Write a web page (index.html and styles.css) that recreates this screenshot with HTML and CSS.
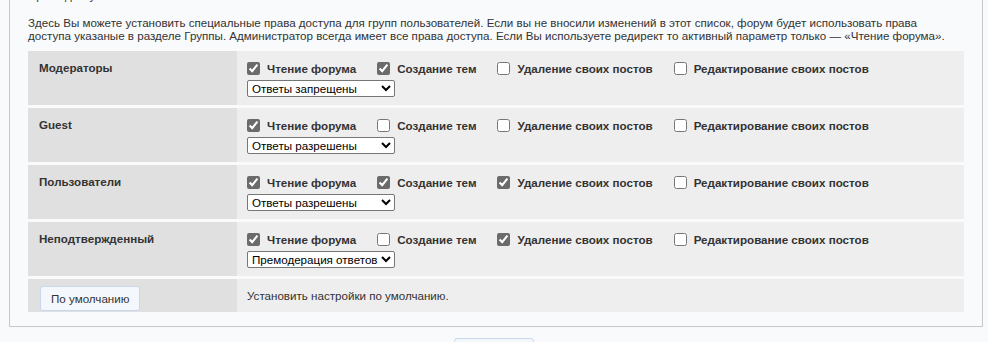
FILE: index.html
```html
<!DOCTYPE html>
<html lang="ru">
<head>
  <meta charset="UTF-8" />
  <title>Права доступа</title>
  <link rel="stylesheet" href="styles.css">
</head>
<body>
  <div class="box">
    <div class="box-title">Права доступа</div>
    <p class="intro">Здесь Вы можете установить специальные права доступа для групп пользователей. Если вы не вносили изменений в этот список, форум будет использовать права доступа указаные в разделе Группы. Администратор всегда имеет все права доступа. Если Вы используете редирект то активный параметр только — «Чтение форума».</p>

    <div class="perms">
      <div class="perm-row">
        <div class="perm-group">Модераторы</div>
        <div class="perm-opts">
          <div class="checks">
            <label class="chk"><input type="checkbox" checked> Чтение форума</label>
            <label class="chk"><input type="checkbox" checked> Создание тем</label>
            <label class="chk"><input type="checkbox"> Удаление своих постов</label>
            <label class="chk"><input type="checkbox"> Редактирование своих постов</label>
          </div>
          <select class="reply-select">
            <option>Ответы запрещены</option>
            <option>Ответы разрешены</option>
            <option>Премодерация ответов</option>
          </select>
        </div>
      </div>

      <div class="perm-row">
        <div class="perm-group">Guest</div>
        <div class="perm-opts">
          <div class="checks">
            <label class="chk"><input type="checkbox" checked> Чтение форума</label>
            <label class="chk"><input type="checkbox"> Создание тем</label>
            <label class="chk"><input type="checkbox"> Удаление своих постов</label>
            <label class="chk"><input type="checkbox"> Редактирование своих постов</label>
          </div>
          <select class="reply-select">
            <option>Ответы запрещены</option>
            <option selected>Ответы разрешены</option>
            <option>Премодерация ответов</option>
          </select>
        </div>
      </div>

      <div class="perm-row">
        <div class="perm-group">Пользователи</div>
        <div class="perm-opts">
          <div class="checks">
            <label class="chk"><input type="checkbox" checked> Чтение форума</label>
            <label class="chk"><input type="checkbox" checked> Создание тем</label>
            <label class="chk"><input type="checkbox" checked> Удаление своих постов</label>
            <label class="chk"><input type="checkbox"> Редактирование своих постов</label>
          </div>
          <select class="reply-select">
            <option>Ответы запрещены</option>
            <option selected>Ответы разрешены</option>
            <option>Премодерация ответов</option>
          </select>
        </div>
      </div>

      <div class="perm-row">
        <div class="perm-group">Неподтвержденный</div>
        <div class="perm-opts">
          <div class="checks">
            <label class="chk"><input type="checkbox" checked> Чтение форума</label>
            <label class="chk"><input type="checkbox"> Создание тем</label>
            <label class="chk"><input type="checkbox" checked> Удаление своих постов</label>
            <label class="chk"><input type="checkbox"> Редактирование своих постов</label>
          </div>
          <select class="reply-select">
            <option>Ответы запрещены</option>
            <option>Ответы разрешены</option>
            <option selected>Премодерация ответов</option>
          </select>
        </div>
      </div>

      <div class="perm-row perm-row-reset">
        <div class="perm-group"><button class="btn" type="button">По умолчанию</button></div>
        <div class="perm-opts perm-note">Установить настройки по умолчанию.</div>
      </div>
    </div>
  </div>

  <div class="submit-bar">
    <button class="btn btn-submit" type="submit">Сохранить</button>
  </div>
</body>
</html>
```

FILE: styles.css
```css
body {
  margin: 0;
  padding: 0;
  background: #f8fafc;
  font-family: "Liberation Sans", Arial, sans-serif;
  font-size: 11.6px;
  color: #333;
}

.box {
  margin: -11px 5px 0 9px;
  padding: 0 18px 14px;
  border: 1px solid #c8c8c8;
  border-top: none;
}

.box-title {
  line-height: 13px;
}

.intro {
  margin: 14px 0 9px;
  padding-right: 12px;
  line-height: 13px;
}

.perms {
  display: flex;
  flex-direction: column;
  gap: 3px;
}

.perm-row {
  display: grid;
  grid-template-columns: 209px 1fr;
}

.perm-group {
  background: #e0e0e0;
  padding: 9px 11px;
  font-weight: bold;
  line-height: 16px;
}

.perm-opts {
  background: #eeeeee;
  padding: 9px 10px 8px;
}

.checks {
  display: flex;
  gap: 21px;
  height: 16px;
  align-items: center;
  margin-bottom: 4px;
}

.chk {
  display: flex;
  align-items: center;
  gap: 7px;
  font-weight: bold;
  white-space: nowrap;
}

.chk input {
  margin: 0;
  width: 13px;
  height: 13px;
  accent-color: #6b6b6b;
}

.reply-select {
  display: block;
  width: 148px;
  height: 17px;
  padding: 0;
  font-family: "Liberation Sans", Arial, sans-serif;
  font-size: 11.6px;
  color: #000;
  background: #fff;
  border: 1px solid #767676;
  border-radius: 2px;
}

.perm-row-reset .perm-group {
  padding: 7px 12px 1px;
  line-height: 0;
}

.perm-note {
  line-height: 16px;
}

.btn {
  height: 25px;
  padding: 0 10px;
  font-family: "Liberation Sans", Arial, sans-serif;
  font-size: 11.6px;
  color: #333;
  background: #f4f7fb;
  border: 1px solid #c9d8ec;
  border-radius: 3px;
}

.submit-bar {
  display: flex;
  justify-content: center;
  margin-top: 11px;
}

.btn-submit {
  width: 80px;
}
```
